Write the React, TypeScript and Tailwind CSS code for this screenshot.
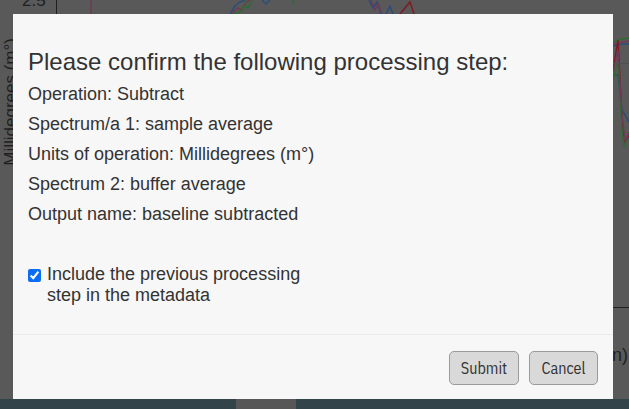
import React from "react";

function ChartBg() {
  return (
    <svg className="absolute inset-0" width="629" height="409" viewBox="0 0 629 409">
      <line x1="56.5" y1="0" x2="56.5" y2="14" stroke="#1f1f1f" strokeWidth="1" />
      <line x1="91" y1="0" x2="91" y2="14" stroke="#6e3a55" strokeWidth="1.5" />
      <polyline points="230,14 235,6 240,2 245,0" fill="none" stroke="#2b4d7a" strokeWidth="1.5" />
      <polyline points="232,14 238,8 242,10 246,2 250,0" fill="none" stroke="#6e3a55" strokeWidth="1.5" />
      <polyline points="234,14 240,12 244,6 248,8 252,0" fill="none" stroke="#2f6b33" strokeWidth="1.5" />
      <polyline points="262,0 266,4 270,0" fill="none" stroke="#2b4d7a" strokeWidth="1.5" />
      <line x1="245" y1="0" x2="246" y2="5" stroke="#2f6b33" strokeWidth="1.5" />
      <line x1="293" y1="0" x2="294" y2="5" stroke="#2f6b33" strokeWidth="1.5" />
      <polyline points="369,0 373,8 377,2 381,14" fill="none" stroke="#2b4d7a" strokeWidth="1.5" />
      <polyline points="371,0 375,10 378,4 382,14" fill="none" stroke="#6e3a55" strokeWidth="1.5" />
      <polyline points="386,14 390,6 393,14" fill="none" stroke="#2b4d7a" strokeWidth="1.5" />
      <polyline points="400,14 405,8 410,2 414,14" fill="none" stroke="#7d1c22" strokeWidth="1.5" />
      <polyline points="613,42 618,40 623,39 629,38" fill="none" stroke="#2f6b33" strokeWidth="1.5" />
      <polyline points="613,44 618,43 623,42 629,41" fill="none" stroke="#6e3a55" strokeWidth="1.5" />
      <polyline points="613,46 618,45 623,44 629,44" fill="none" stroke="#2b4d7a" strokeWidth="1.5" />
      <polyline points="613,70 618,40 622,120 625,143 629,135" fill="none" stroke="#7d1c22" strokeWidth="1.5" />
      <polyline points="613,75 618,75 622,110 629,122" fill="none" stroke="#2b4d7a" strokeWidth="1.5" />
      <polyline points="613,80 618,60 622,130 624,147 629,132" fill="none" stroke="#2f6b33" strokeWidth="1.5" />
      <polyline points="613,72 618,50 622,115 625,140 629,133" fill="none" stroke="#6e3a55" strokeWidth="1.5" />
      <line x1="613" y1="307.5" x2="629" y2="307.5" stroke="#222" strokeWidth="1" />
      <line x1="613" y1="63.5" x2="629" y2="63.5" stroke="#505050" strokeWidth="1" />
    </svg>
  );
}

const btnFont = { fontFamily: '"IBM Plex Sans Condensed", "Roboto Condensed", Roboto, sans-serif' };

export default function App() {
  return (
    <div
      className="relative w-[629px] h-[409px] overflow-hidden bg-[#595959] flex flex-col"
      style={{ fontFamily: '"Liberation Sans", Arial, sans-serif' }}
    >
      <ChartBg />
      <div className="absolute left-[22px] top-[-12px] text-[17px] text-[#1f1f1f]">2.5</div>
      <div
        className="absolute left-[-2px] top-[38px] text-[17px] text-[#1f1f1f] whitespace-nowrap"
        style={{ writingMode: "vertical-rl", transform: "rotate(180deg)" }}
      >
        Millidegrees (m°)
      </div>
      <div className="absolute left-[612px] top-[342px] text-[18px] text-[#1f1f1f]">n)</div>
      <div className="flex-1" />
      <div className="relative h-[10px] bg-[#32444a] flex">
        <div className="ml-[236px] w-[60px] bg-[#575757]" />
      </div>

      <div className="absolute left-[13px] top-[14px] w-[600px] h-[385px] bg-[#f7f7f7] flex flex-col text-[#333]">
        <div className="flex-1 pl-[15px] pt-[33px]">
          <div className="text-[24px] leading-[30px]">Please confirm the following processing step:</div>
          <div className="text-[18px] leading-[30px] mt-[2px]">
            <div>Operation: Subtract</div>
            <div>Spectrum/a 1: sample average</div>
            <div>Units of operation: Millidegrees (m°)</div>
            <div>Spectrum 2: buffer average</div>
            <div>Output name: baseline subtracted</div>
          </div>
          <label className="mt-[35px] flex items-start gap-[6px] text-[18px] leading-[21px]">
            <input type="checkbox" defaultChecked className="mt-[5px] w-[13px] h-[13px] accent-[#0b6cf5]" />
            <span className="w-[262px]">Include the previous processing step in the metadata</span>
          </label>
        </div>
        <div className="h-[65px] border-t border-[#ebebeb] flex items-start justify-end gap-[10px] pt-[16px] pr-[15px]">
          <button
            className="h-[34px] w-[70px] rounded-[5px] border border-[#9a9a9a] bg-[#d9d9d9] text-[16px] text-[#333]"
            style={btnFont}
          >
            Submit
          </button>
          <button
            className="h-[34px] w-[69px] rounded-[5px] border border-[#9a9a9a] bg-[#d9d9d9] text-[16px] text-[#333]"
            style={btnFont}
          >
            Cancel
          </button>
        </div>
      </div>
    </div>
  );
}
